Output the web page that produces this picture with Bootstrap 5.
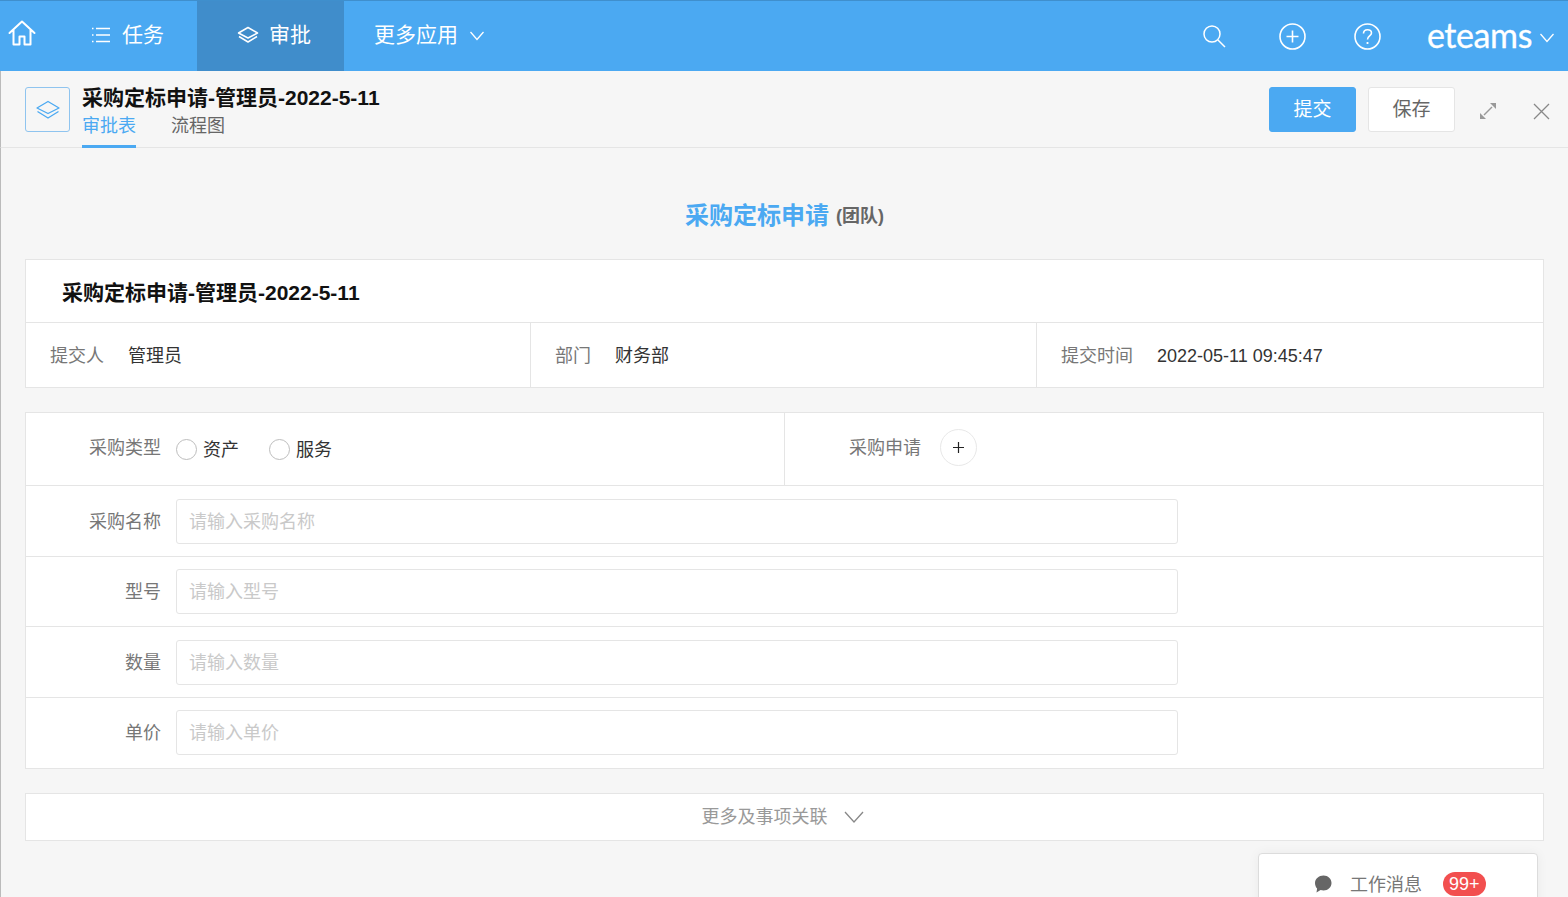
<!DOCTYPE html>
<html lang="zh"><head><meta charset="utf-8"><title>采购定标申请</title>
<link href="https://cdn.jsdelivr.net/npm/bootstrap@5.3.0/dist/css/bootstrap.min.css" rel="stylesheet">
<style>
html,body{height:897px;overflow:hidden}
body{font-family:"Liberation Sans","Noto Sans CJK SC",sans-serif;background:#f6f6f6;color:#333;font-size:18px;position:relative}
svg{display:block;flex:none}
.topbar{height:71px;background:#4ba9f2;border-top:1px solid #3f8fcd;color:#fff;font-size:21px}
.home-cell{width:44px;justify-content:center;padding-bottom:6px}
.nav-cell{height:70px;color:#fff}
.cell-task{width:153px;padding-left:47px;padding-bottom:3px;gap:7px}
.cell-active{width:147px;background:#408dcb;padding-left:40px;padding-bottom:3px;gap:10px}
.cell-more{padding-left:30px;padding-bottom:3px}
.more-chev{margin-left:10px;margin-top:3px}
.tool-search{margin-right:53px}
.tool-plus{margin-right:48px}
.tool-help{margin-right:46px}
.logo-text{font-family:"Lato",sans-serif;font-size:34px;line-height:1;letter-spacing:-.4px;font-weight:400;margin-right:6px;margin-bottom:3px;-webkit-text-stroke:.3px #fff}
.logo-chev{margin-right:12px;margin-top:3px}
.head-band{height:77px;border-bottom:1px solid #e5e5e5;border-left:1px solid #bbb;padding-left:24px;padding-right:18px}
.app-icon{width:45px;height:45px;border:1px solid #8fc4ef;border-radius:3px;margin-top:16px;margin-right:12px}
.head-title{font-size:21px;font-weight:700;color:#111;line-height:24px;margin-top:15px}
.tab-row{margin-top:4px}
.tab-on,.tab-off{font-size:18px;line-height:24px;height:34px}
.tab-on{color:#4ba9f2;border-bottom:3px solid #4ba9f2;margin-right:35px}
.tab-off{color:#666}
.btn-submit,.btn-save{width:87px;height:45px;font-size:19px;border-radius:3px;padding:0;line-height:43px}
.btn-submit{background:#4ba9f2;border:1px solid #4ba9f2;color:#fff;margin-right:12px}
.btn-save{background:#fff;border:1px solid #e5e5e5;color:#666;margin-right:24px}
.head-actions{padding-top:16px}
.expand-ic{margin-top:15px;margin-right:36px}
.close-ic{margin-top:16px}
.page-body{padding:0 24px;border-left:1px solid #bbb;height:749px}
.form-heading{height:111px;padding-top:25px}
.h-main{font-size:24px;font-weight:700;color:#4ba9f2}
.h-sub{font-size:18px;font-weight:700;color:#666;margin-left:7px}
.panel{background:#fff;border:1px solid #e5e5e5}
.info-title{height:63px;border-bottom:1px solid #e5e5e5;padding-left:36px;font-size:21px;font-weight:700;color:#111;line-height:66px}
.info-row{height:64px}
.info-col{border-right:1px solid #e5e5e5;padding-left:24px;line-height:66px;font-size:18px}
.info-col:last-child{border-right:0}
.info-c1{width:505px}.info-c2{width:506px}
.i-label{color:#777;margin-right:24px}
.i-val{color:#333}
.form-panel{margin-top:24px}
.f-row{border-bottom:1px solid #e5e5e5;height:71px}
.f-row:last-child{border-bottom:0}
.f-row-top{height:73px}
.row-a{padding-top:13px}
.row-b{padding-top:12px;height:70px}
.row-c{padding-top:13px;height:71px}
.row-d{padding-top:12px;height:70px}
.f-half{width:759px}
.f-half+.f-half{border-left:1px solid #e5e5e5;width:auto;flex:1}
.f-half:first-child{width:758px}
.f-label{width:135px;text-align:right;color:#777;font-size:18px;margin-right:15px;flex:none;line-height:47px}
.f-label-top{margin-bottom:2px}
.f-label2{width:136px;margin-right:19px}
.f-input{width:1002px;height:45px;border:1px solid #e5e5e5;border-radius:3px;font-size:18px;padding:2px 12px 0;color:#333;box-shadow:none;background:#fff}
.f-input::placeholder{color:#c9c9c9;opacity:1}
.radio-dot{width:21px;height:21px;border:1px solid #bdbdbd;border-radius:50%;background:#fff;margin-right:6px;flex:none;margin-top:1px}
.radio-text{color:#333;font-size:18px;margin-right:30px;margin-top:3px}
.add-circle{width:37px;height:37px;border:1px solid #e8e8e8;border-radius:50%;justify-content:center;background:#fff;margin-bottom:3px}
.more-bar{margin-top:24px;height:48px;color:#999;font-size:18px;gap:16px;padding-right:4px}
.msg-float{position:absolute;left:1258px;top:853px;width:280px;height:60px;background:#fff;border:1px solid #dcdcdc;border-radius:4px;box-shadow:0 0 12px rgba(0,0,0,.05);padding-top:18px;padding-left:55px;color:#777;font-size:18px}
.msg-ic{margin-right:18px;margin-top:3px}
.msg-count{background:#f24f4f;color:#fff;font-size:18px;line-height:24px;height:24px;padding:0 6px;border-radius:12px;margin-left:21px}
</style></head>
<body>
<nav class="topbar d-flex align-items-center">
  <div class="nav-cell home-cell d-flex align-items-center">
    <svg width="28" height="26" viewBox="0 0 28 26" fill="none" stroke="#fff" stroke-width="2" stroke-linejoin="round" stroke-linecap="round"><path d="M1.500 13 14 1.500 26.500 13M5.500 10v14.500h6v-8h5v8h6V10"/></svg>
  </div>
  <div class="nav-cell cell-task d-flex align-items-center">
    <svg width="20" height="18" viewBox="0 0 20 18" fill="none" stroke="#fff" stroke-width="1.300"><path d="M5 2.500h14M5 9h14M5 15.500h14"/><path d="M1 2.500h1.500M1 9h1.500M1 15.500h1.500"/></svg>
    <span class="ms-1">任务</span>
  </div>
  <div class="nav-cell cell-active d-flex align-items-center">
    <svg width="22" height="18" viewBox="0 0 22 18" fill="none" stroke="#fff" stroke-width="1.500" stroke-linejoin="round"><path d="M11 1.500 20.500 7 11 12 1.500 7z"/><path d="M2 10.500 11 16l9-5.500"/></svg>
    <span>审批</span>
  </div>
  <div class="nav-cell cell-more d-flex align-items-center">
    <span>更多应用</span>
    <svg class="more-chev" width="18" height="12" viewBox="0 0 18 12" fill="none" stroke="#fff" stroke-width="1.300"><path d="M2.500 2 9 9.500 15.500 2"/></svg>
  </div>
  <div class="ms-auto d-flex align-items-center">
    <svg class="tool-search" width="24" height="24" viewBox="0 0 24 24" fill="none" stroke="#fff" stroke-width="1.500"><circle cx="10" cy="10" r="8"/><path d="m16 16 7 7"/></svg>
    <svg class="tool-plus" width="27" height="27" viewBox="0 0 27 27" fill="none" stroke="#fff" stroke-width="1.600"><circle cx="13.500" cy="13.500" r="12.500"/><path d="M13.500 7.500v12M7.500 13.500h12"/></svg>
    <svg class="tool-help" width="27" height="27" viewBox="0 0 27 27" fill="none" stroke="#fff" stroke-width="1.600"><circle cx="13.500" cy="13.500" r="12.500"/><path d="M9.500 10.500c0-5 8-5 8-.5 0 3-4 3-4 6.500"/><path d="M13.500 19v2" stroke-width="1.800"/></svg>
    <span class="logo-text">eteams</span>
    <svg class="logo-chev" width="18" height="12" viewBox="0 0 18 12" fill="none" stroke="#fff" stroke-width="1.300"><path d="M2.500 2 9 9.500 15.500 2"/></svg>
  </div>
</nav>
<header class="head-band d-flex">
  <div class="app-icon d-flex align-items-center justify-content-center">
    <svg width="24" height="20" viewBox="0 0 24 20" fill="none" stroke="#4ba9f2" stroke-width="1.300" stroke-linejoin="round"><path d="M12 1.500 23 8 12 13.500 1 8z"/><path d="M1.500 11.500 12 18l10.500-6.500"/></svg>
  </div>
  <div class="ms-0">
    <div class="head-title">采购定标申请-管理员-2022-5-11</div>
    <div class="d-flex tab-row"><div class="tab-on">审批表</div><div class="tab-off">流程图</div></div>
  </div>
  <div class="ms-auto d-flex align-items-start head-actions">
    <button type="button" class="btn btn-submit">提交</button>
    <button type="button" class="btn btn-save">保存</button>
    <svg class="expand-ic" width="18" height="18" viewBox="0 0 18 18" fill="none" stroke="#999" stroke-width="1.500"><path d="M5 13 13 5"/><path d="M11 1h6v6z" fill="#999" stroke="none"/><path d="M1 11v6h6z" fill="#999" stroke="none"/></svg>
    <svg class="close-ic" width="17" height="17" viewBox="0 0 17 17" fill="none" stroke="#888" stroke-width="1.300"><path d="M1 1l15 15M16 1 1 16"/></svg>
  </div>
</header>
<main class="page-body">
  <div class="form-heading d-flex align-items-center justify-content-center"><span class="h-main">采购定标申请</span><span class="h-sub">(团队)</span></div>
  <section class="panel">
    <div class="info-title">采购定标申请-管理员-2022-5-11</div>
    <div class="info-row d-flex">
      <div class="info-col info-c1"><span class="i-label">提交人</span><span class="i-val">管理员</span></div>
      <div class="info-col info-c2"><span class="i-label">部门</span><span class="i-val">财务部</span></div>
      <div class="info-col flex-grow-1"><span class="i-label">提交时间</span><span class="i-val">2022-05-11 09:45:47</span></div>
    </div>
  </section>
  <section class="panel form-panel">
    <div class="f-row f-row-top d-flex">
      <div class="f-half d-flex align-items-center">
        <div class="f-label f-label-top">采购类型</div>
        <span class="radio-dot"></span><span class="radio-text">资产</span>
        <span class="radio-dot"></span><span class="radio-text">服务</span>
      </div>
      <div class="f-half d-flex align-items-center">
        <div class="f-label f-label2 f-label-top">采购申请</div>
        <div class="add-circle d-flex align-items-center">
          <svg width="13" height="13" viewBox="0 0 13 13" fill="none" stroke="#222" stroke-width="1.200"><path d="M6.500 1v11M1 6.500h11"/></svg>
        </div>
      </div>
    </div>
    <div class="f-row row-a d-flex align-items-start"><div class="f-label">采购名称</div><input class="form-control f-input" placeholder="请输入采购名称"></div>
    <div class="f-row row-b d-flex align-items-start"><div class="f-label">型号</div><input class="form-control f-input" placeholder="请输入型号"></div>
    <div class="f-row row-c d-flex align-items-start"><div class="f-label">数量</div><input class="form-control f-input" placeholder="请输入数量"></div>
    <div class="f-row row-d d-flex align-items-start"><div class="f-label">单价</div><input class="form-control f-input" placeholder="请输入单价"></div>
  </section>
  <section class="panel more-bar d-flex align-items-center justify-content-center">
    <span>更多及事项关联</span>
    <svg width="20" height="14" viewBox="0 0 20 14" fill="none" stroke="#888" stroke-width="1.300"><path d="M1 2l9 10 9-10"/></svg>
  </section>
</main>
<aside class="msg-float d-flex align-items-start">
  <svg class="msg-ic" width="18" height="18" viewBox="0 0 18 18" fill="#666"><path d="M9.500.5c4.500 0 8 3.300 8 7.500s-3.500 7.500-8 7.500c-1 0-2-.2-2.900-.5L2.500 17.500l.6-4C1.800 12.200 1 10.200 1 8 1 3.800 5 .5 9.500.5z"/></svg>
  <span>工作消息</span><span class="msg-count">99+</span>
</aside>
<script src="https://cdn.jsdelivr.net/npm/bootstrap@5.3.0/dist/js/bootstrap.bundle.min.js"></script>
</body></html>
